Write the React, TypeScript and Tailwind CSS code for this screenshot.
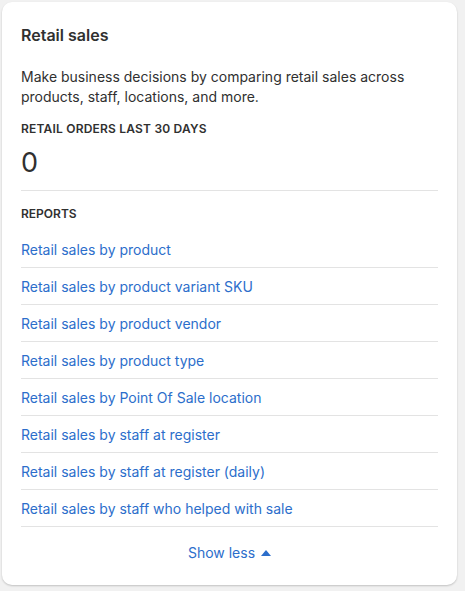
export default function App() {
  const links = [
    "Retail sales by product",
    "Retail sales by product variant SKU",
    "Retail sales by product vendor",
    "Retail sales by product type",
    "Retail sales by Point Of Sale location",
    "Retail sales by staff at register",
    "Retail sales by staff at register (daily)",
    "Retail sales by staff who helped with sale",
  ];
  return (
    <div className="min-h-[591px] bg-[#f1f1f1] p-[2px] pr-[8px] pb-[5px]" style={{ fontFamily: "Inter, 'Noto Sans', sans-serif" }}>
      <div className="bg-white rounded-[10px] shadow-[0_1px_2px_rgba(0,0,0,0.2)] px-[19px] pt-[22px] pb-[22px] text-[#303030]">
        <h2 className="text-[16px] font-semibold leading-[22px]">Retail sales</h2>
        <p className="mt-[21px] text-[14px] leading-[20px]">Make business decisions by comparing retail sales across products, staff, locations, and more.</p>
        <div className="mt-[14px] text-[12px] font-semibold leading-[16px] tracking-[0.2px]">RETAIL ORDERS LAST 30 DAYS</div>
        <div className="mt-[10px] text-[27px] leading-[32px]">0</div>
        <div className="mt-[11px] border-t border-[#e3e3e3]" />
        <div className="mt-[15px] text-[12px] font-semibold leading-[16px]">REPORTS</div>
        <div className="mt-[9px]">
          {links.map((l) => (
            <div key={l} className="h-[37px] flex items-center border-b border-[#e3e3e3] text-[14px] text-[#2c6ecb]">{l}</div>
          ))}
        </div>
        <div className="mt-[16px] flex items-center justify-center gap-[6px] text-[14px] text-[#2c6ecb] leading-[20px]">
          Show less
          <svg width="10" height="6" viewBox="0 0 10 6"><path d="M0 6L5 0L10 6Z" fill="#2c6ecb" /></svg>
        </div>
      </div>
    </div>
  );
}
